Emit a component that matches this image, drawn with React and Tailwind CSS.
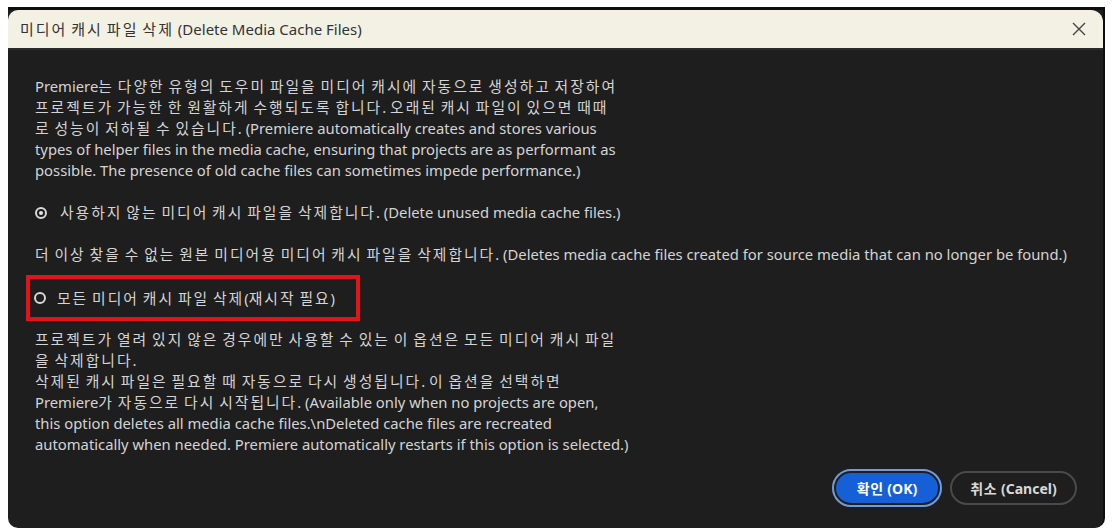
import React, { useState } from 'react';

const font = { fontFamily: '"Noto Sans", "Noto Sans CJK KR", sans-serif' };

// Hangul runs get extra letter room so they sit as wide as in the original dialog font
const Ko = ({ children, wide = true }) => (
  <span>
    {children.split(/([\uAC00-\uD7A3]+)/).map((part, i) =>
      /[\uAC00-\uD7A3]/.test(part) ? (
        <span key={i} className={wide ? 'tracking-[2px]' : 'tracking-[0.6px]'}>
          {part}
        </span>
      ) : (
        part
      )
    )}
  </span>
);

const Radio = ({ checked }) => (
  <span className="flex h-[12px] w-[12px] shrink-0 items-center justify-center rounded-full border-[2px] border-[#d8d8d8] bg-[#1e1e1e]">
    {checked && <span className="h-[4px] w-[4px] rounded-full bg-[#e6e6e6]" />}
  </span>
);

const Line = ({ children }) => (
  <div>
    <Ko>{children}</Ko>
  </div>
);

const App = () => {
  const [option, setOption] = useState('unused');

  return (
    <div className="h-[530px] w-[1115px] overflow-hidden bg-white pl-[8px] pt-[7px]" style={font}>
      <div className="flex h-[521px] w-[1097px] flex-col overflow-hidden rounded-b-[10px] border-t-[3px] border-r-[2px] border-[#0e0e0e] bg-[#1e1e1e]">
        {/* Title bar */}
        <div className="flex h-[40px] shrink-0 items-center justify-between rounded-tl-[10px] rounded-tr-[12px] border-b-[2px] border-[#2a2a2a] bg-[#f3f0e4] pl-[12px] pr-[14px]">
          <span className="text-[15px] text-[#333333]">
            <Ko>미디어 캐시 파일 삭제 (Delete Media Cache Files)</Ko>
          </span>
          <button type="button" className="flex h-[20px] w-[20px] items-center justify-center">
            <svg width="14" height="14" viewBox="0 0 14 14">
              <path d="M1 1 L13 13 M13 1 L1 13" stroke="#444" strokeWidth="1.4" />
            </svg>
          </button>
        </div>

        {/* Body */}
        <div className="flex flex-1 flex-col pl-[27px] pr-[16px] pt-[26px] text-[14.8px] leading-[21px] text-[#d4d4d4]">
          <div className="whitespace-nowrap">
            <Line>Premiere는 다양한 유형의 도우미 파일을 미디어 캐시에 자동으로 생성하고 저장하여</Line>
            <Line>프로젝트가 가능한 한 원활하게 수행되도록 합니다. 오래된 캐시 파일이 있으면 때때</Line>
            <Line>로 성능이 저하될 수 있습니다. (Premiere automatically creates and stores various</Line>
            <Line>types of helper files in the media cache, ensuring that projects are as performant as</Line>
            <Line>possible. The presence of old cache files can sometimes impede performance.)</Line>
          </div>

          <button
            type="button"
            onClick={() => setOption('unused')}
            className="mt-[21px] flex items-center gap-[13px] whitespace-nowrap text-left"
          >
            <Radio checked={option === 'unused'} />
            <Ko>사용하지 않는 미디어 캐시 파일을 삭제합니다. (Delete unused media cache files.)</Ko>
          </button>

          <div className="mt-[21px] whitespace-nowrap">
            <Ko>
              더 이상 찾을 수 없는 원본 미디어용 미디어 캐시 파일을 삭제합니다. (Deletes media cache files created for source media that can no longer be found.)
            </Ko>
          </div>

          <div className="mt-[10px] -ml-[9px] flex h-[46px] w-[334px] items-center border-[4px] border-[#e5121b] pl-[4px]">
            <button
              type="button"
              onClick={() => setOption('all')}
              className="flex items-center gap-[11px] whitespace-nowrap text-left"
            >
              <Radio checked={option === 'all'} />
              <Ko>모든 미디어 캐시 파일 삭제(재시작 필요)</Ko>
            </button>
          </div>

          <div className="mt-[8px] whitespace-nowrap">
            <Line>프로젝트가 열려 있지 않은 경우에만 사용할 수 있는 이 옵션은 모든 미디어 캐시 파일</Line>
            <Line>을 삭제합니다.</Line>
            <Line>삭제된 캐시 파일은 필요할 때 자동으로 다시 생성됩니다. 이 옵션을 선택하면</Line>
            <Line>Premiere가 자동으로 다시 시작됩니다. (Available only when no projects are open,</Line>
            <Line>this option deletes all media cache files.\nDeleted cache files are recreated</Line>
            <Line>automatically when needed. Premiere automatically restarts if this option is selected.)</Line>
          </div>

          <div className="mt-[14px] flex justify-end gap-[8px] pr-[10px]">
            <button
              type="button"
              className="flex h-[38px] w-[110px] items-center justify-center rounded-full border-[2px] border-[#6f9ce0] bg-[#1f1f1f] p-[2px]"
            >
              <span className="flex h-full w-full items-center justify-center rounded-full bg-[#1560d6] text-[14px] font-bold text-white">
                <Ko wide={false}>확인 (OK)</Ko>
              </span>
            </button>
            <button
              type="button"
              className="flex h-[34px] w-[127px] items-center justify-center self-center rounded-full border-[2px] border-[#4a4a4a] bg-[#1e1e1e] text-[14px] font-bold text-[#d8d8d8]"
            >
              <Ko wide={false}>취소 (Cancel)</Ko>
            </button>
          </div>
        </div>
      </div>
    </div>
  );
};

export default App;
